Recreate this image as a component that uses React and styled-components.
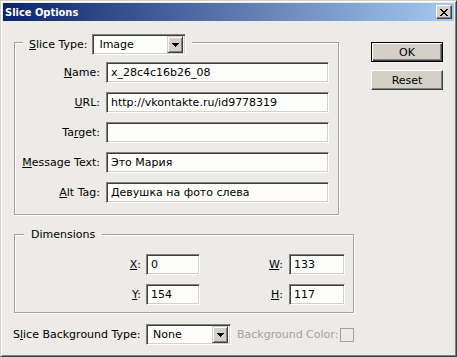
import React from "react";
import styled, { createGlobalStyle } from "styled-components";

const BG = "#ecebe7";
const FACE = "#d4d0c8";

const Global = createGlobalStyle`
  html, body { margin: 0; padding: 0; background: ${BG}; }
  * { box-sizing: border-box; }
  body { font-family: "DejaVu Sans", "Liberation Sans", sans-serif; font-size: 11px; color: #000; }
`;

const Window = styled.div`
  width: 457px;
  height: 357px;
  background: ${BG};
  border: 1px solid;
  border-color: ${FACE} #404040 #404040 ${FACE};
  box-shadow: inset 1px 1px 0 #fff, inset -1px -1px 0 #808080;
  padding: 2px;
  display: flex;
  flex-direction: column;
`;

const TitleBar = styled.div`
  height: 18px;
  flex: none;
  display: flex;
  align-items: center;
  justify-content: space-between;
  padding: 0 2px 0 2px;
  background: linear-gradient(to right, #0a246a, #a6caf0);
`;

const Title = styled.span`
  color: #fff;
  font-family: "DejaVu Sans Condensed", "DejaVu Sans", sans-serif;
  font-stretch: condensed;
  font-weight: bold;
  font-size: 11px;
  line-height: 13px;
`;

const CloseButton = styled.div`
  width: 16px;
  height: 14px;
  background: ${FACE};
  border: 1px solid;
  border-color: #fff #404040 #404040 #fff;
  box-shadow: inset -1px -1px 0 #808080;
  display: flex;
  align-items: center;
  justify-content: center;
`;

const Body = styled.div`
  display: flex;
  padding: 21px 0 0 11px;
`;

const LeftCol = styled.div`
  width: 340px;
  flex: none;
  display: flex;
  flex-direction: column;
`;

const Group = styled.div`
  width: ${(p) => p.$w}px;
  margin-top: ${(p) => p.$mt || 0}px;
  border: 1px solid #a3a39f;
  box-shadow: 1px 1px 0 #fff, inset 1px 1px 0 #fff;
  padding: ${(p) => p.$pad};
`;

const Legend = styled.div`
  display: flex;
  align-items: center;
  gap: 5px;
  width: fit-content;
  background: ${BG};
  margin: ${(p) => p.$m};
  padding: ${(p) => p.$p};
  line-height: 13px;
`;

const FieldGrid = styled.div`
  display: grid;
  grid-template-columns: 85px 223px;
  column-gap: 6px;
  row-gap: 9px;
`;

const DimGrid = styled.div`
  display: grid;
  grid-template-columns: 131px 54px 89px 56px;
  row-gap: 9px;
`;

const Label = styled.label`
  text-align: right;
  line-height: 21px;
  white-space: nowrap;
  padding-right: ${(p) => p.$pr || 0}px;
`;

const TextBox = styled.input`
  width: 100%;
  height: 21px;
  margin: 0;
  font: inherit;
  color: #000;
  background: #fdfefb;
  padding: 0 3px 0 4px;
  border: 1px solid;
  border-color: #808080 #fff #fff #808080;
  box-shadow: inset 1px 1px 0 #404040, inset -1px -1px 0 ${FACE};
  outline: none;
`;

const Select = styled.div`
  width: ${(p) => p.$w}px;
  height: 21px;
  flex: none;
  display: flex;
  align-items: center;
  background: #fdfefb;
  border: 1px solid;
  border-color: #808080 #fff #fff #808080;
  box-shadow: inset 1px 1px 0 #404040, inset -1px -1px 0 ${FACE};
  padding: 2px;
`;

const SelectValue = styled.span`
  flex: 1;
  padding-left: 4px;
  line-height: 17px;
`;

const ArrowButton = styled.div`
  width: 16px;
  height: 17px;
  background: ${FACE};
  border: 1px solid;
  border-color: ${FACE} #404040 #404040 ${FACE};
  box-shadow: inset 1px 1px 0 #fff, inset -1px -1px 0 #808080;
  display: flex;
  align-items: center;
  justify-content: center;
`;

const BottomRow = styled.div`
  display: flex;
  align-items: center;
  margin-top: 11px;
  margin-left: -1px;
`;

const RowLabel = styled.span`
  flex: none;
  width: ${(p) => (p.$w ? `${p.$w}px` : "auto")};
  white-space: nowrap;
  color: ${(p) => (p.$disabled ? "#a3a39b" : "#000")};
  margin-left: ${(p) => p.$ml || 0}px;
`;

const ColorSwatch = styled.div`
  flex: none;
  width: 14px;
  height: 14px;
  margin-left: auto;
  margin-right: 0;
  border: 1px solid #a3a39b;
`;

const RightCol = styled.div`
  margin-left: 17px;
  display: flex;
  flex-direction: column;
  gap: 8px;
`;

const Button = styled.div`
  width: 72px;
  height: 20px;
  background: ${FACE};
  display: flex;
  align-items: center;
  justify-content: center;
  border: 1px solid;
  border-color: ${(p) => (p.$default ? "#000" : "#fff #404040 #404040 #fff")};
  box-shadow: ${(p) =>
    p.$default
      ? "inset 1px 1px 0 #fff, inset -1px -1px 0 #404040, inset -2px -2px 0 #808080"
      : "inset -1px -1px 0 #808080"};
  line-height: 13px;
`;

const Arrow = () => (
  <svg width="7" height="4" viewBox="0 0 7 4" shapeRendering="crispEdges">
    <path d="M0 0H7V1H6V2H5V3H4V4H3V3H2V2H1V1H0Z" fill="#000" />
  </svg>
);

const CloseX = () => (
  <svg width="8" height="7" viewBox="0 0 8 7" shapeRendering="crispEdges">
    <path
      d="M0 0H2V1H3V2H5V1H6V0H8V1H7V2H6V3H5V4H6V5H7V6H8V7H6V6H5V5H3V6H2V7H0V6H1V5H2V4H3V3H2V2H1V1H0Z"
      fill="#000"
    />
  </svg>
);

const fields = [
  { label: <><u>N</u>ame:</>, value: "x_28c4c16b26_08" },
  { label: <><u>U</u>RL:</>, value: "http://vkontakte.ru/id9778319" },
  { label: <>Ta<u>r</u>get:</>, value: "" },
  { label: <><u>M</u>essage Text:</>, value: "Это Мария" },
  { label: <><u>A</u>lt Tag:</>, value: "Девушка на фото слева" },
];

export default function App() {
  return (
    <>
      <Global />
      <Window>
        <TitleBar>
          <Title>Slice Options</Title>
          <CloseButton>
            <CloseX />
          </CloseButton>
        </TitleBar>
        <Body>
          <LeftCol>
            <Group $w={325} $pad="0 7px 11px 0">
              <Legend $m="-9px 0 7px 8px" $p="0 6px">
                <span>
                  <u>S</u>lice Type:
                </span>
                <Select $w={94}>
                  <SelectValue>Image</SelectValue>
                  <ArrowButton>
                    <Arrow />
                  </ArrowButton>
                </Select>
              </Legend>
              <FieldGrid>
                {fields.map((f, i) => (
                  <React.Fragment key={i}>
                    <Label>{f.label}</Label>
                    <TextBox readOnly value={f.value} />
                  </React.Fragment>
                ))}
              </FieldGrid>
            </Group>
            <Group $w={340} $mt={19} $pad="0 7px 7px 0">
              <Legend $m="-7px 0 13px 9px" $p="0 7px">
                Dimensions
              </Legend>
              <DimGrid>
                <Label $pr={5}>
                  <u>X</u>:
                </Label>
                <TextBox readOnly value="0" />
                <Label $pr={6}>
                  <u>W</u>:
                </Label>
                <TextBox readOnly value="133" />
                <Label $pr={5}>
                  <u>Y</u>:
                </Label>
                <TextBox readOnly value="154" />
                <Label $pr={6}>
                  <u>H</u>:
                </Label>
                <TextBox readOnly value="117" />
              </DimGrid>
            </Group>
            <BottomRow>
              <RowLabel $w={133}>
                S<u>l</u>ice Background Type:
              </RowLabel>
              <Select $w={85}>
                <SelectValue>None</SelectValue>
                <ArrowButton>
                  <Arrow />
                </ArrowButton>
              </Select>
              <RowLabel $disabled $ml={6}>
                Background Color:
              </RowLabel>
              <ColorSwatch />
            </BottomRow>
          </LeftCol>
          <RightCol>
            <Button $default>OK</Button>
            <Button>Reset</Button>
          </RightCol>
        </Body>
      </Window>
    </>
  );
}
